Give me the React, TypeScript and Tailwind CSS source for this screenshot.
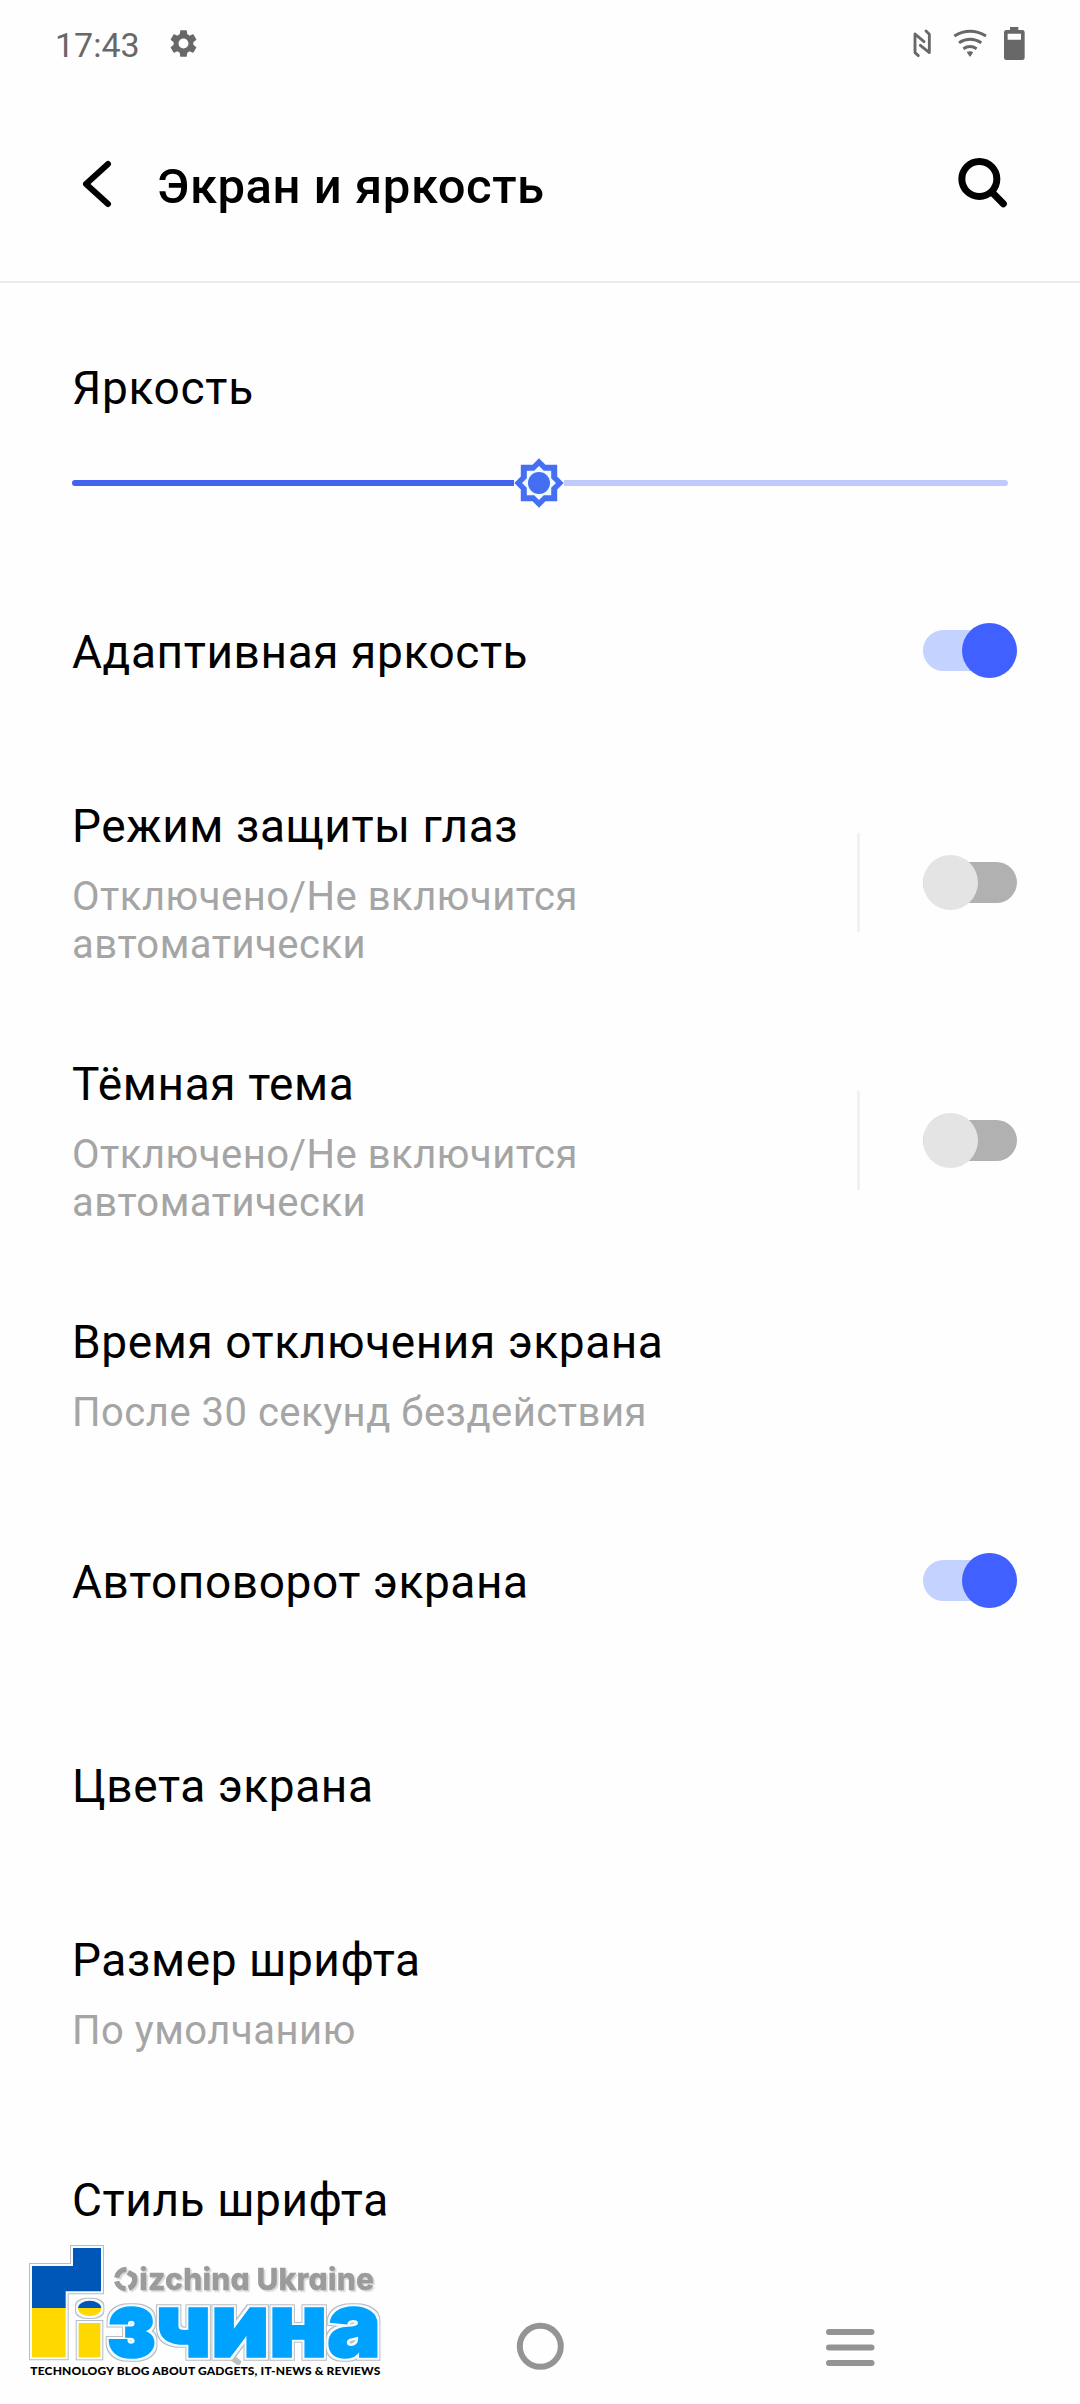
import type { ReactNode } from 'react';
import { MdSettings } from 'react-icons/md';

function StatusBar() {
  return (
    <div className="flex h-[88px] items-start justify-between pl-[55px] pr-[55px] text-[#686868]">
      <div className="flex pt-[25px]">
        <span className="w-[112px] text-[34px] leading-[40px]">17:43</span>
        <MdSettings className="mt-[2px] h-[33px] w-[33px]" />
      </div>
      <svg className="mt-[26px] h-[36px] w-[112px]" viewBox="160 78 336 108" fill="none" stroke="currentColor" strokeLinecap="round" strokeLinejoin="round">
        <g strokeWidth="8.5">
          <path d="M176 167L166 158V102L193 125" />
          <path d="M199 93L209 103V158L182 136" />
        </g>
        <g strokeWidth="9" strokeLinecap="butt">
          <path d="M284 108Q331 80 379 108" />
          <path d="M298 128Q331 107 365 128" />
          <path d="M311 146Q331 133 351 146" />
        </g>
        <path d="M324 157Q331 154 338 157L331 168Z" fill="currentColor" strokeWidth="4" />
        <path fillRule="evenodd" stroke="none" fill="currentColor" d="M451 81H476V90H488Q495 90 495 97V173Q495 180 488 180H440Q433 180 433 173V97Q433 90 440 90H451ZM444 101V119H484V101Z" />
      </svg>
    </div>
  );
}

function Header() {
  return (
    <header className="flex h-[195px] items-start border-b-2 border-[#ebebeb] pl-[82px] pr-[72px]">
      <svg className="mt-[71px] h-[50px] w-[32px]" viewBox="246 477 96 150" fill="none" stroke="#000" strokeWidth="18" strokeLinecap="round" strokeLinejoin="round">
        <path d="M324 492L258 552L324 612" />
      </svg>
      <h1 className="ml-[43px] mt-[70px] flex-1 text-[49px] font-medium leading-[57px] tracking-[0.55px]">Экран и яркость</h1>
      <svg className="mt-[69px] h-[52px] w-[50px]" viewBox="294 471 150 156" fill="none" stroke="#000" strokeWidth="21" strokeLinecap="round">
        <circle cx="358" cy="537" r="52.5" />
        <path d="M399 580L430 611" />
      </svg>
    </header>
  );
}

function BrightnessSlider() {
  return (
    <div className="flex h-[49px] items-center">
      <div className="h-[6px] w-[442px] rounded-l-full bg-[#4263ee]" />
      <svg className="h-[50px] w-[50px]" viewBox="-25 -25 50 50">
        <path fill="#456ff2" d="M0-24.7L6.5-18.2H18.2V-6.5L24.7 0L18.2 6.5V18.2H6.5L0 24.7L-6.5 18.2H-18.2V6.5L-24.7 0L-18.2-6.5V-18.2H-6.5Z" />
        <path fill="#effaff" d="M0-17L4.8-12.2H12.2V-4.8L17 0L12.2 4.8V12.2H4.8L0 17L-4.8 12.2H-12.2V4.8L-17 0L-12.2-4.8V-12.2H-4.8Z" />
        <circle r="11" fill="#456ff2" />
      </svg>
      <div className="h-[6px] flex-1 rounded-r-full bg-[#bfcbfa]" />
    </div>
  );
}

function Toggle({ on }: { on?: boolean }) {
  return on ? (
    <div className="flex h-[55px] w-[94px] items-center">
      <div className="h-[41px] w-full rounded-full bg-[#c3d2ff]" />
      <div className="-ml-[55px] h-[55px] w-[55px] shrink-0 rounded-full bg-[#4060ff]" />
    </div>
  ) : (
    <div className="flex h-[55px] w-[94px] items-center">
      <div className="z-10 -mr-[55px] h-[55px] w-[55px] shrink-0 rounded-full bg-[#e4e4e4]" />
      <div className="h-[41px] w-full rounded-full bg-[#b1b1b1]" />
    </div>
  );
}

function Row({ title, note, className, children }: { title: string; note?: string; className: string; children?: ReactNode }) {
  return (
    <div className={`flex items-start ${className}`}>
      <div className="w-[620px]">
        <p className="whitespace-nowrap text-[46px] leading-[54px] tracking-[0.6px]">{title}</p>
        {note && <p className="mt-[20px] text-[40px] leading-[48px] tracking-[0.5px] text-[#a5a5a5]">{note}</p>}
      </div>
      {children}
    </div>
  );
}

function Divided() {
  return (
    <div className="mt-[34px] flex h-[99px] flex-1 items-center justify-between pl-[165px]">
      <div className="h-full w-[3px] bg-[#f1f1f1]" />
      <Toggle />
    </div>
  );
}

function NavBar() {
  return (
    <svg className="absolute left-0 top-[2300px] h-[90px] w-[1080px]" viewBox="0 2300 1080 90" fill="none" stroke="#949494" strokeWidth="6" strokeLinecap="round">
      <path d="M238 2362L216 2345L238 2328" strokeOpacity="0.6" />
      <circle cx="540.3" cy="2346.3" r="20.5" />
      <path d="M829 2332H871.5M829 2347.4H871.5M829 2363H871.5" />
    </svg>
  );
}

function BlogLogo() {
  return (
    <svg className="absolute left-0 top-[2220px] h-[184px] w-[400px]" viewBox="0 0 1200 552">
      <defs>
        <linearGradient id="flag" gradientUnits="userSpaceOnUse" x1="0" y1="84" x2="0" y2="446">
          <stop offset="0.5" stopColor="#0057b8" />
          <stop offset="0.5" stopColor="#ffd800" />
        </linearGradient>
        <filter id="outline" filterUnits="userSpaceOnUse" x="60" y="50" width="1120" height="400" colorInterpolationFilters="sRGB">
          <feMorphology in="SourceAlpha" operator="dilate" radius="9" result="wide" />
          <feFlood floodColor="#b9bec4" />
          <feComposite in2="wide" operator="in" result="edge" />
          <feMorphology in="SourceAlpha" operator="dilate" radius="6" result="narrow" />
          <feFlood floodColor="#f4fcff" />
          <feComposite in2="narrow" operator="in" result="halo" />
          <feMerge>
            <feMergeNode in="edge" />
            <feMergeNode in="halo" />
            <feMergeNode in="SourceGraphic" />
          </feMerge>
        </filter>
        <filter id="soft" filterUnits="userSpaceOnUse" x="320" y="120" width="840" height="120" colorInterpolationFilters="sRGB">
          <feDropShadow dx="5" dy="5" stdDeviation="1" floodColor="#d8d8d8" />
        </filter>
      </defs>
      <g filter="url(#outline)">
        <g fill="url(#flag)">
          <path d="M96 138H219V84H303V214H197V412H96Z" />
          <ellipse cx="269" cy="265" rx="35" ry="23" />
          <rect x="236" y="309" width="65" height="103" />
        </g>
        <text x="321" y="411" fontFamily="Inter, sans-serif" fontWeight="900" fontSize="272" textLength="822" fill="#00a2ff" stroke="#00a2ff" strokeWidth="5">зчина</text>
      </g>
      <g fill="#9b9b9b" stroke="#9b9b9b" filter="url(#soft)">
        <path fill="none" strokeWidth="16" d="M379 148A29 29 0 0 0 350 173M350 184A29 29 0 0 0 377 206M386 205A29 29 0 0 0 402 167L384 157" />
        <text x="418" y="211" fontFamily="Inter, sans-serif" fontWeight="800" fontSize="90" textLength="704" strokeWidth="1" className="[font-feature-settings:'cv11']">izchina Ukraine</text>
      </g>
      <text x="91" y="465" fontFamily="Lato, sans-serif" fontWeight="900" fontSize="36" textLength="1050" fill="#000">TECHNOLOGY BLOG ABOUT GADGETS, IT-NEWS &amp; REVIEWS</text>
    </svg>
  );
}

export default function App() {
  return (
    <div className="relative h-[2404px] w-[1080px] overflow-hidden bg-[#fefefe] font-['Roboto',sans-serif] text-black">
      <StatusBar />
      <Header />
      <main className="pl-[72px] pr-[63px]">
        <section className="h-[269px] pr-[9px] pt-[78px]">
          <p className="text-[46px] leading-[54px] tracking-[0.7px]">Яркость</p>
          <div className="mt-[43px]">
            <BrightnessSlider />
          </div>
        </section>
        <Row title="Адаптивная яркость" className="h-[202px] justify-between pt-[73px]">
          <div className="-mt-[2px]"><Toggle on /></div>
        </Row>
        <Row title="Режим защиты глаз" note="Отключено/Не включится автоматически" className="h-[258px] pt-[45px]">
          <Divided />
        </Row>
        <Row title="Тёмная тема" note="Отключено/Не включится автоматически" className="h-[258px] pt-[45px]">
          <Divided />
        </Row>
        <Row title="Время отключения экрана" note="После 30 секунд бездействия" className="h-[212px] pt-[45px]" />
        <Row title="Автоповорот экрана" className="h-[200px] justify-between pt-[73px]">
          <div className="-mt-[2px]"><Toggle on /></div>
        </Row>
        <Row title="Цвета экрана" className="h-[206px] pt-[77px]" />
        <Row title="Размер шрифта" note="По умолчанию" className="h-[212px] pt-[45px]" />
        <Row title="Стиль шрифта" className="h-[200px] pt-[73px]" />
      </main>
      <NavBar />
      <BlogLogo />
    </div>
  );
}
